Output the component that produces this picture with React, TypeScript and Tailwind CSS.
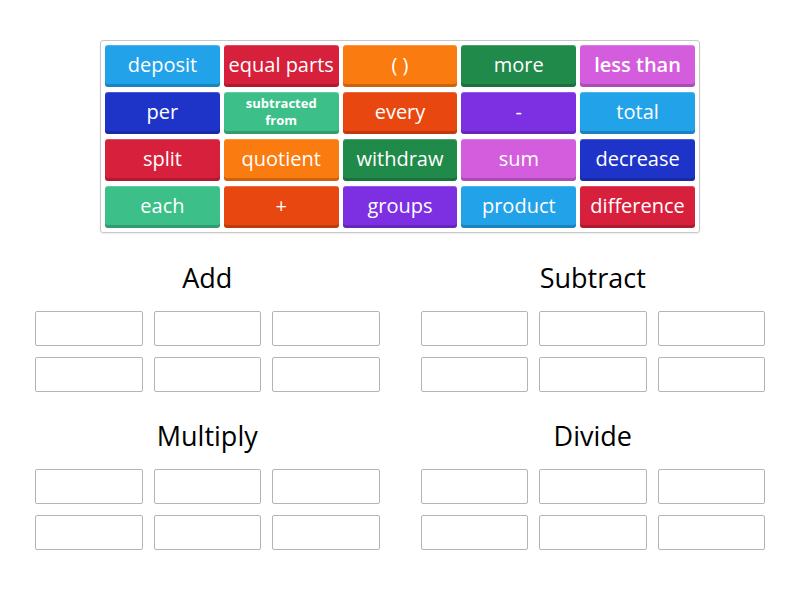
import React from 'react';

const TILES: { label: string; color: string; small?: boolean; bold?: boolean }[] = [
  { label: 'deposit', color: 'bg-[#22a2e8]' },
  { label: 'equal parts', color: 'bg-[#d7203b]' },
  { label: '( )', color: 'bg-[#fa7b10]' },
  { label: 'more', color: 'bg-[#208a4a]' },
  { label: 'less than', color: 'bg-[#d35ddc]', bold: true },
  { label: 'per', color: 'bg-[#1e34c9]' },
  { label: 'subtracted from', color: 'bg-[#3dbf89]', small: true },
  { label: 'every', color: 'bg-[#e84810]' },
  { label: '-', color: 'bg-[#7c30e2]' },
  { label: 'total', color: 'bg-[#22a2e8]' },
  { label: 'split', color: 'bg-[#d7203b]' },
  { label: 'quotient', color: 'bg-[#fa7b10]' },
  { label: 'withdraw', color: 'bg-[#208a4a]' },
  { label: 'sum', color: 'bg-[#d35ddc]' },
  { label: 'decrease', color: 'bg-[#1e34c9]' },
  { label: 'each', color: 'bg-[#3dbf89]' },
  { label: '+', color: 'bg-[#e84810]' },
  { label: 'groups', color: 'bg-[#7c30e2]' },
  { label: 'product', color: 'bg-[#22a2e8]' },
  { label: 'difference', color: 'bg-[#d7203b]' },
];

const GROUPS = ['Add', 'Subtract', 'Multiply', 'Divide'];

const Group: React.FC<{ title: string }> = ({ title }) => (
  <div className="flex flex-col items-center">
    <h2 className="text-[27px] leading-[32px] text-black">{title}</h2>
    <div className="mt-[17px] grid w-full grid-cols-3 gap-x-[11px] gap-y-[11px]">
      {Array.from({ length: 6 }).map((_, i) => (
        <div key={i} className="h-[35px] rounded-[2px] border border-[#b4b4b4] bg-white" />
      ))}
    </div>
  </div>
);

const App: React.FC = () => {
  return (
    <div className="h-[600px] w-[800px] overflow-hidden bg-white pt-[40px] font-['Open_Sans',sans-serif]">
      <div className="mx-auto w-[600px] rounded-[3px] border border-[#c8c8c8] p-[4px] shadow-[0_1px_2px_rgba(0,0,0,0.08)]">
        <div className="grid grid-cols-5 gap-x-[4px] gap-y-[5px]">
          {TILES.map((t) => (
            <div
              key={t.label}
              className={`flex h-[42px] items-center justify-center rounded-[3px] pb-[2px] text-center text-white shadow-[inset_0_-3px_0_rgba(0,0,0,0.18),inset_0_1px_0_rgba(255,255,255,0.2)] ${t.color}`}
            >
              {t.small ? (
                <span className="px-2 text-[13px] font-bold leading-[17px]">
                  <span className="block">subtracted</span>
                  <span className="block">from</span>
                </span>
              ) : (
                <span className={`text-[20px] leading-none ${t.bold ? 'font-semibold' : ''}`}>{t.label}</span>
              )}
            </div>
          ))}
        </div>
      </div>
      <div className="mt-[29px] grid grid-cols-2 gap-x-[41px] gap-y-[28px] px-[35px]">
        {GROUPS.map((g) => (
          <Group key={g} title={g} />
        ))}
      </div>
    </div>
  );
};

export default App;
